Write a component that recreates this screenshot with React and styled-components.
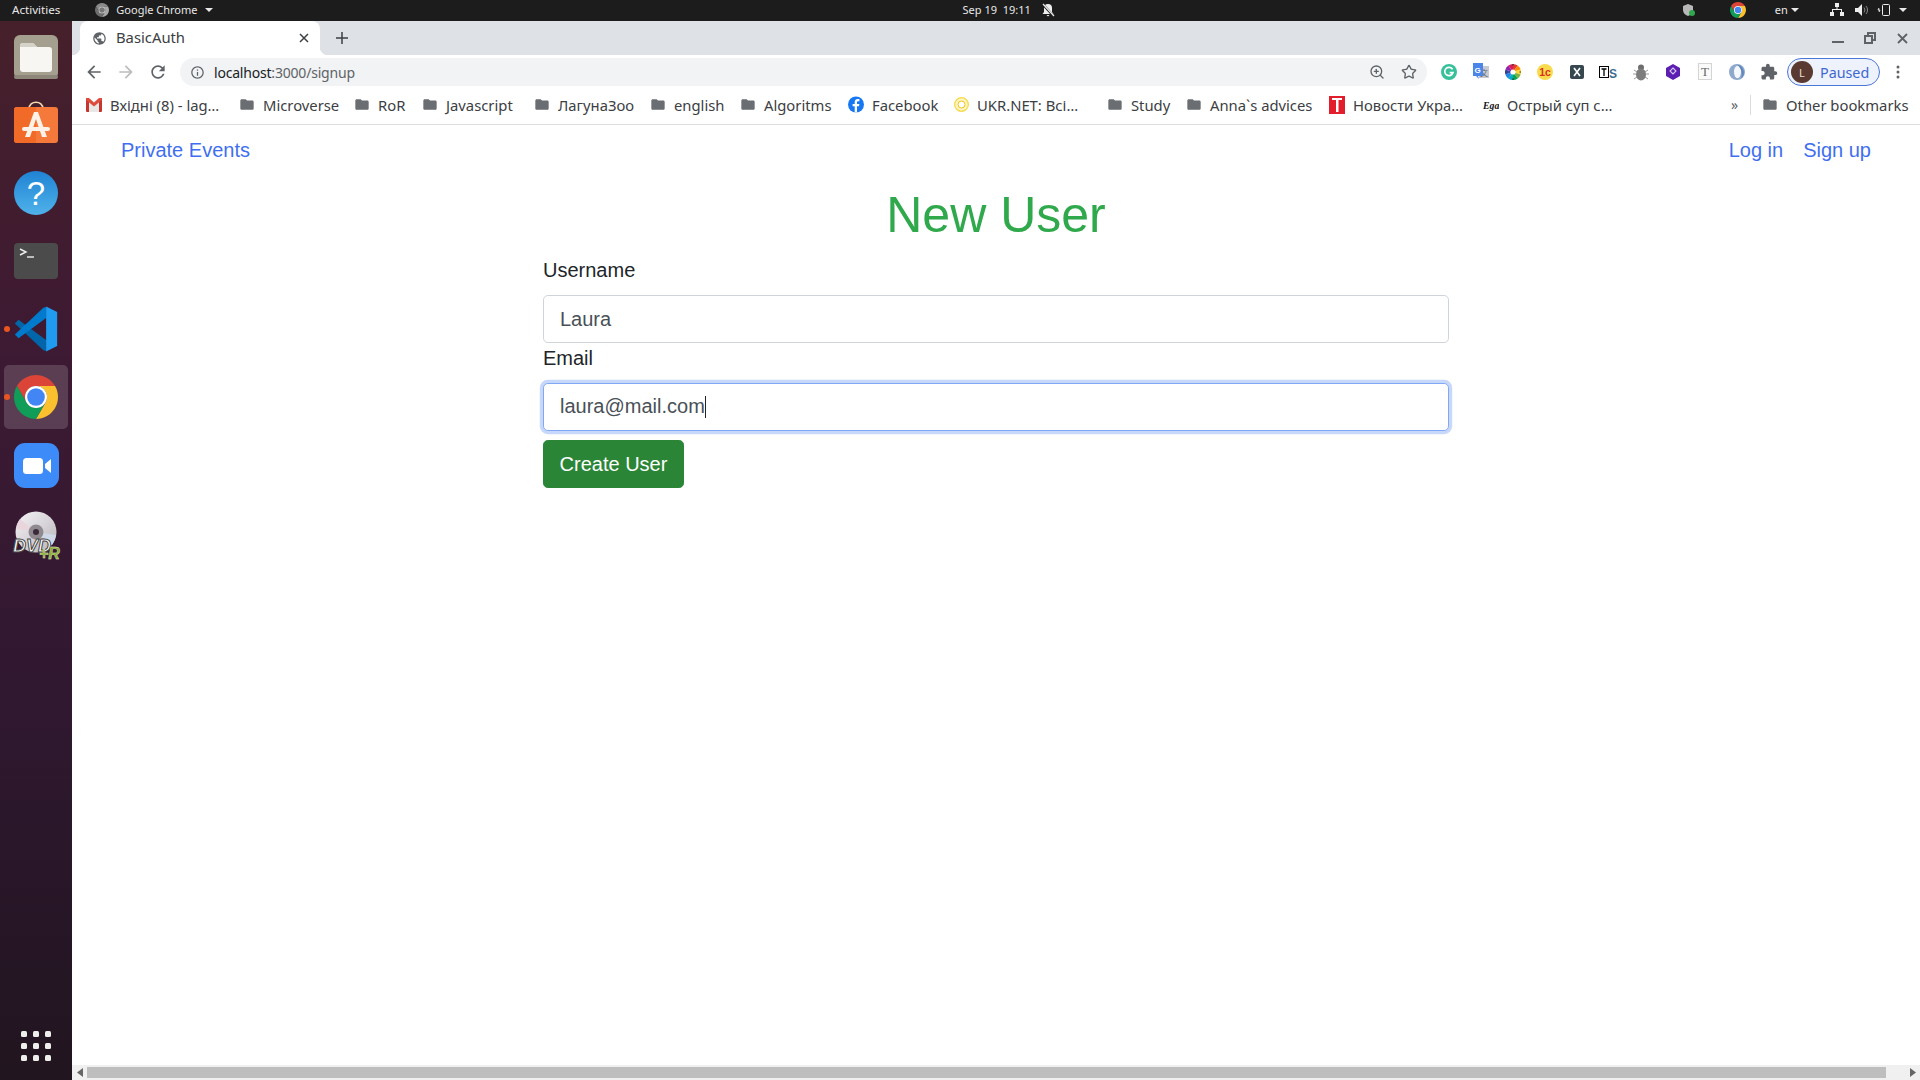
import React from 'react';
import styled, { createGlobalStyle } from 'styled-components';
import { Star, ZoomIn } from 'lucide-react';

const Global = createGlobalStyle`
  html, body { margin: 0; padding: 0; width: 1920px; height: 1080px; overflow: hidden; background: #fff; }
  #root { width: 1920px; height: 1080px; }
  * { box-sizing: border-box; }
`;

const UI = `"Noto Sans", "Open Sans", sans-serif`;
const WEB = `"Liberation Sans", Arial, sans-serif`;

const Screen = styled.div`display: flex; flex-direction: column; width: 1920px; height: 1080px; overflow: hidden;`;
const TopBar = styled.header`
  display: flex; align-items: center; height: 21px; flex: none; padding-bottom: 2px; background: #1c1c1c; color: #e8e8e8;
  font: 11px ${UI};
`;
const TopItem = styled.div`display: flex; align-items: center; gap: ${p => p.$gap || 0}px; margin-left: ${p => p.$ml || 0}px; white-space: nowrap; font-size: ${p => p.$fs || 11}px;`;
const Caret = styled.span`width: 0; height: 0; border-left: 4px solid transparent; border-right: 4px solid transparent; border-top: 4px solid #e8e8e8; margin-left: ${p => p.$ml || 0}px;`;

const Main = styled.div`display: flex; flex: 1; min-height: 0;`;
const Dock = styled.nav`
  width: 72px; flex: none; display: flex; flex-direction: column; align-items: center; padding-top: 4px;
  background: linear-gradient(180deg, #46202a 0%, #3e1a33 30%, #2f1830 65%, #21151f 100%);
`;
const DockItem = styled.div`
  position: relative; width: 64px; height: 64px; margin-bottom: 4px; flex: none; border-radius: 5px;
  display: flex; align-items: center; justify-content: center;
  background: ${p => p.$active ? 'rgba(255,255,255,.16)' : 'transparent'};
`;
const RunDot = styled.span`position: absolute; left: 0; top: 29px; width: 6px; height: 6px; border-radius: 50%; background: #e95420;`;
const GridButton = styled.div`
  margin-top: auto; margin-bottom: 19px; display: grid; grid-template-columns: repeat(3, 6px); gap: 6px;
`;
const GridDot = styled.span`width: 6px; height: 6px; border-radius: 1.5px; background: #eeeeea;`;

const Browser = styled.div`flex: 1; min-width: 0; display: flex; flex-direction: column; background: #fff;`;
const TabStrip = styled.div`height: 34px; flex: none; background: #dee1e6; display: flex; align-items: stretch; padding-left: 8px;`;
const Tab = styled.div`
  position: relative; width: 240px; background: #fff; border-radius: 8px 8px 0 0; display: flex; align-items: center;
  padding-left: 12px; font: 14.8px ${UI}; color: #3c4043;
  &::before, &::after { content: ''; position: absolute; bottom: 0; width: 8px; height: 8px; }
  &::before { left: -8px; background: radial-gradient(circle at 0 0, transparent 8px, #fff 8.5px); }
  &::after { right: -8px; background: radial-gradient(circle at 100% 0, transparent 8px, #fff 8.5px); }
`;
const TabTitle = styled.span`margin-left: 9px; margin-bottom: 2px; flex: 1;`;
const TabClose = styled.span`display: flex; margin-right: 11px;`;
const NewTab = styled.div`width: 44px; display: flex; align-items: center; justify-content: center;`;
const WindowControls = styled.div`margin-left: auto; display: flex; align-items: center; padding-right: 2px;`;
const WinBtn = styled.div`width: 32px; height: 34px; display: flex; align-items: center; justify-content: center;`;

const Toolbar = styled.div`height: 34px; flex: none; display: flex; align-items: center; padding: 0 6px; background: #fff;`;
const NavBtn = styled.div`width: 32px; height: 32px; flex: none; display: flex; align-items: center; justify-content: center;`;
const Omnibox = styled.div`
  flex: 1; height: 28px; margin: 0 6px; border-radius: 14px; background: #f1f3f4; display: flex; align-items: center; padding: 0 2px 0 10px;
  font: 14px ${UI}; color: #5f6368;
`;
const UrlHost = styled.span`color: #202124;`;
const UrlText = styled.div`margin-left: 9px; flex: 1; letter-spacing: -.2px;`;
const OmniIcon = styled.div`width: 32px; display: flex; justify-content: center;`;
const Pill = styled.div`
  width: 93px; height: 28px; flex: none; margin: 0 2px; border: 1.5px solid #4a76d8; border-radius: 14px; background: #edf2fc;
  display: flex; align-items: center; padding-left: 3px; color: #3f68cf; font: 14.3px ${UI};
`;
const Avatar = styled.span`width: 22px; height: 22px; border-radius: 50%; background: #5a3a30; color: #e6dcd6; font-size: 11px; display: flex; align-items: center; justify-content: center; margin-right: 7px;`;

const BookmarksBar = styled.div`
  height: 36px; flex: none; display: flex; align-items: center; padding: 0 15px 4px 14px; border-bottom: 1px solid #dadce0;
  font: 14.8px ${UI}; color: #3c4043; background: #fff;
`;
const Bookmark = styled.div`display: flex; align-items: center; width: ${p => p.$w}px; flex: none; white-space: nowrap;`;
const BmIcon = styled.span`width: 16px; height: 16px; flex: none; display: flex; align-items: center; justify-content: center; margin-right: 8px;`;
const BmLabel = styled.span``;
const More = styled.div`margin-left: auto; font-size: 14px; color: #5f6368; width: 19px;`;
const Sep = styled.span`width: 1px; height: 20px; background: #dadce0; margin-right: 11px;`;

const Page = styled.main`flex: 1; min-height: 0; background: #fff; font: 20px/30px ${WEB}; color: #212529;`;
const SiteNav = styled.div`height: 50px; display: flex; align-items: center; justify-content: space-between; padding: 0 49px;`;
const NavLink = styled.a`color: #3f6ff0; text-decoration: none; margin-left: ${p => p.$ml || 0}px;`;
const NavRight = styled.div`display: flex;`;
const Form = styled.div`width: 906px; margin: 0 auto;`;
const Heading = styled.h1`margin: 10px 0 9.6px; font: 400 50px/60px ${WEB}; color: #2fa94b; text-align: center;`;
const Label = styled.label`display: block; margin-bottom: 10px; height: 30px;`;
const Field = styled.div`
  height: 48px; padding: ${p => p.$focus ? '7px' : '8px'} 16px 0; border: 1px solid ${p => p.$focus ? '#80a8f5' : '#ced4da'}; border-radius: 4.8px; color: #495057; background: #fff;
  box-shadow: ${p => p.$focus ? '0 0 0 3.2px #c8d8fb' : 'none'}; line-height: 30px;
`;
const Cursor = styled.span`display: inline-block; width: 1px; height: 22px; background: #212529; vertical-align: -5px;`;
const Button = styled.button`
  display: block; margin-top: 9px; width: 141px; height: 48px; border: 1px solid #2a8636; border-radius: 4.8px; background: #2a8636; color: #fff;
  font: 20px/30px ${WEB}; padding: 0;
`;

const HScroll = styled.div`height: 15px; flex: none; display: flex; align-items: center; background: #f0f0f0;`;
const ScrollArrow = styled.div`width: 15px; display: flex; justify-content: center;`;
const Thumb = styled.div`flex: 1; height: 11px; background: #bebebe; margin-right: 19px;`;

const Icon = ({ d, size = 24, fill = '#5f6368' }) => (
  <svg width={size} height={size} viewBox="0 0 24 24" fill={fill}><path d={d} /></svg>
);
const FOLDER = 'M10 4H4c-1.1 0-1.99.9-1.99 2L2 18c0 1.1.9 2 2 2h16c1.1 0 2-.9 2-2V8c0-1.1-.9-2-2-2h-8l-2-2z';
const Folder = () => <Icon d={FOLDER} size={17} fill="#6a6d71" />;

const ChromeLogo = ({ size, gray }) => (
  <svg width={size} height={size} viewBox="4 4 40 40">
    <path d="M24 14H41.32A20 20 0 0 0 6.68 14L15.34 29A10 10 0 0 1 24 14Z" fill={gray ? '#8a8a8a' : '#db4437'} />
    <path d="M24 14H41.32A20 20 0 0 1 24 44L32.66 29A10 10 0 0 0 24 14Z" fill={gray ? '#a8a8a8' : '#fbc02d'} />
    <path d="M15.34 29L6.68 14A20 20 0 0 0 24 44L32.66 29A10 10 0 0 1 15.34 29Z" fill={gray ? '#6e6e6e' : '#0f9d58'} />
    <circle cx="24" cy="24" r="10" fill={gray ? '#ddd' : '#fff'} />
    <circle cx="24" cy="24" r="8" fill={gray ? '#777' : '#4285f4'} />
  </svg>
);

const FilesIcon = () => (
  <svg width="44" height="44" viewBox="0 0 44 44">
    <rect width="44" height="44" rx="6" fill="#a49f8e" />
    <rect y="40" width="44" height="4" rx="2" fill="#8c8778" />
    <path d="M6 11a3 3 0 0 1 3-3h10l4 4h12a3 3 0 0 1 3 3v19a3 3 0 0 1-3 3H9a3 3 0 0 1-3-3z" fill="#f7f6f3" />
    <path d="M6 11a3 3 0 0 1 3-3h10l4 4H6z" fill="#d5d2c8" />
  </svg>
);
const ShopIcon = () => (
  <svg width="44" height="48" viewBox="0 0 44 48">
    <path d="M15 8c0-9 14-9 14 0" fill="none" stroke="#f5d8b0" strokeWidth="1.6" />
    <rect y="6" width="44" height="36" rx="3" fill="#f4793b" />
    <path d="M0 9a3 3 0 0 1 3-3h19v36H3a3 3 0 0 1-3-3z" fill="#f26a27" />
    <path d="M20 11h4l9 25h-5l-6-18-6 18h-5z" fill="#fdf1e8" />
    <rect x="8" y="26" width="28" height="4" rx="2" fill="#fdf1e8" />
  </svg>
);
const HelpIcon = () => (
  <svg width="44" height="44" viewBox="0 0 44 44">
    <defs><linearGradient id="h" x1="0" y1="0" x2="0" y2="1"><stop offset="0" stopColor="#2083d4" /><stop offset="1" stopColor="#4fb2ea" /></linearGradient></defs>
    <circle cx="22" cy="22" r="22" fill="url(#h)" />
    <text x="22" y="34" textAnchor="middle" fontFamily="Liberation Sans" fontSize="33" fill="#fff">?</text>
  </svg>
);
const TerminalIcon = () => (
  <svg width="44" height="36" viewBox="0 0 44 36">
    <rect width="44" height="36" rx="4" fill="#4b4b4b" />
    <path d="M6 6l6 3-6 3" fill="none" stroke="#eee" strokeWidth="1.4" />
    <path d="M13 14h7" stroke="#eee" strokeWidth="1.4" />
  </svg>
);
const VSCode = () => (
  <svg width="46" height="46" viewBox="0 0 100 100">
    <polygon points="4,38 12,30 72,74 72,98 66,96" fill="#0065a9" />
    <polygon points="72,2 72,26 12,70 4,62 66,4" fill="#007acc" />
    <polygon points="72,1 96,13 96,87 72,99" fill="#1f9cf0" />
  </svg>
);
const ZoomApp = () => (
  <svg width="45" height="45" viewBox="0 0 45 45">
    <rect width="45" height="45" rx="11" fill="#3d8bf8" />
    <rect x="9" y="15" width="20" height="16" rx="3.5" fill="#fff" />
    <path d="M31 21l6-5v14l-6-5z" fill="#fff" />
  </svg>
);
const DvdIcon = () => (
  <svg width="52" height="56" viewBox="0 -4 52 56">
    <defs><linearGradient id="d" x1="0" y1="0" x2="1" y2="1"><stop offset="0" stopColor="#f4f4f4" /><stop offset=".5" stopColor="#d8d4da" /><stop offset="1" stopColor="#b4b4b4" /></linearGradient></defs>
    <circle cx="26" cy="23" r="20.5" fill="url(#d)" />
    <path d="M26 23L10 10A20.500 20.500 0 0 0 6 20z" fill="#e8d6dc" />
    <path d="M26 23L42 36A20.500 20.500 0 0 0 46 26z" fill="#cfd8e6" />
    <circle cx="26" cy="23" r="7.500" fill="#8e8a90" />
    <circle cx="26" cy="23" r="3" fill="#3a2a3a" />
    <text x="3" y="43" fontFamily="Liberation Sans" fontWeight="700" fontStyle="italic" fontSize="18" fill="#fff" stroke="#444" strokeWidth="1">DVD</text>
    <text x="29" y="50" fontFamily="Liberation Sans" fontWeight="700" fontStyle="italic" fontSize="16" fill="#86ad32" stroke="#eaf2d4" strokeWidth=".4">+R</text>
  </svg>
);

const GrammarlyIcon = () => (
  <svg width="16" height="16" viewBox="0 0 16 16"><circle cx="8" cy="8" r="8" fill="#36c19b" /><path d="M11.6 5.4A4.2 4.2 0 1 0 12 8.6H8.6" fill="none" stroke="#fff" strokeWidth="1.7" /></svg>
);
const TranslateIcon = () => (
  <svg width="16" height="18" viewBox="0 0 16 18">
    <rect x="6" y="3" width="10" height="12" fill="#c7cbd1" />
    <text x="11" y="13" textAnchor="middle" fontSize="8" fontFamily="Noto Sans CJK SC" fill="#5f6368">文</text>
    <path d="M0 0h10v13H5l1 3-3-3H0z" fill="#4a86e8" />
    <text x="4.7" y="9.5" textAnchor="middle" fontSize="8" fontWeight="700" fontFamily="Liberation Sans" fill="#fff">G</text>
  </svg>
);
const WHEEL = ['#e53935', '#fb8c00', '#fdd835', '#7cb342', '#00a651', '#00acc1', '#1e88e5', '#3949ab', '#8e24aa', '#d81b60'];
const WheelIcon = () => {
  const n = WHEEL.length;
  return (
    <svg width="16" height="16" viewBox="-8 -8 16 16">
      {WHEEL.map((c, i) => {
        const a = (i / n) * 2 * Math.PI, b = ((i + 1) / n) * 2 * Math.PI;
        return <path key={c} d={`M0 0L${8 * Math.sin(a)} ${-8 * Math.cos(a)}A8 8 0 0 1 ${8 * Math.sin(b)} ${-8 * Math.cos(b)}Z`} fill={c} />;
      })}
      <circle r="2.6" fill="#fff" />
      <path d="M0-8.5v2M0 6.5v2M-8.5 0h2M6.5 0h2" stroke="#333" strokeWidth="1.2" />
    </svg>
  );
};
const OneCIcon = () => (
  <svg width="16" height="16" viewBox="0 0 16 16"><circle cx="8" cy="8" r="8" fill="#f9dc4e" /><text x="8" y="11.5" textAnchor="middle" fontFamily="Liberation Sans" fontWeight="700" fontSize="10.5" fill="#d8321c">1c</text></svg>
);
const XIcon = () => (
  <svg width="14" height="14" viewBox="0 0 14 14"><rect width="14" height="14" rx="2" fill="#37474f" /><path d="M4 3l6 8M10 3l-6 8" stroke="#fff" strokeWidth="1.6" /></svg>
);
const TsIcon = () => (
  <svg width="20" height="16" viewBox="0 -2 20 16">
    <rect x=".5" y=".5" width="9" height="11" fill="#fff" stroke="#000" />
    <path d="M2.5 3h5M5 3v7" stroke="#000" strokeWidth="1.3" />
    <text x="10" y="11.500" fontFamily="Liberation Sans" fontWeight="700" fontSize="12" fill="#3d6d8f">S</text>
  </svg>
);
const BugIcon = () => (
  <svg width="16" height="17" viewBox="0 0 16 17">
    <path d="M1 6l3 2M15 6l-3 2M0 10h3M16 10h-3M1 15l3-2M15 15l-3-2" stroke="#999" strokeWidth="1" />
    <circle cx="8" cy="3.5" r="3" fill="#6e6e6e" />
    <ellipse cx="8" cy="10.5" rx="5" ry="6" fill="#7d7d7d" />
  </svg>
);
const HexIcon = () => (
  <svg width="14" height="16" viewBox="0 0 14 16">
    <path d="M7 0l7 4v8l-7 4-7-4V4z" fill="#5b1fb1" />
    <path d="M7 4l3 3-3 3-3-3z" fill="none" stroke="#d9c8f5" strokeWidth="1.1" />
  </svg>
);
const PaperIcon = () => (
  <svg width="15" height="18" viewBox="0 0 15 18">
    <rect x=".5" y=".5" width="13" height="16" fill="#fafafa" stroke="#d4d4d4" />
    <text x="7" y="13" textAnchor="middle" fontFamily="Liberation Serif" fontSize="13" fill="#666">T</text>
  </svg>
);
const RingIcon = () => (
  <svg width="16" height="16" viewBox="0 0 16 16">
    <circle cx="8" cy="8" r="8" fill="#8fa9cc" />
    <ellipse cx="8.5" cy="8" rx="3.5" ry="6.2" fill="#f4f7fb" />
    <path d="M8 .5a8 8 0 0 1 4 14c1.5-4 1.5-9-4-14z" fill="#5f86bd" />
  </svg>
);
const GmailIcon = () => (
  <svg width="16" height="14" viewBox="0 0 16 14">
    <path d="M3 4l5 4.500L13 4v10H3z" fill="#e8e8e8" />
    <path d="M0 0h3v14H1a1 1 0 0 1-1-1zM13 0h3v13a1 1 0 0 1-1 1h-2z" fill="#c5372c" />
    <path d="M0 0l3 0 5 4.5L13 0l3 0v2l-8 6.5L0 2z" fill="#de4c3e" />
  </svg>
);
const FbIcon = () => (
  <svg width="17" height="17" viewBox="0 0 16 16"><circle cx="8" cy="8" r="8" fill="#1877f2" /><path d="M9 16V9.8h2l.4-2.4H9V6c0-.8.3-1.2 1.2-1.2h1.2V2.6C11 2.5 10.400 2.500 9.800 2.500 8 2.500 6.700 3.600 6.700 5.600v1.800H4.600v2.400h2.100V16z" fill="#fff" /></svg>
);
const UkrIcon = () => (
  <svg width="15" height="15" viewBox="0 0 15 15"><circle cx="7.500" cy="7.500" r="6.800" fill="#fff6c4" stroke="#f7d94a" strokeWidth="1.300" /><circle cx="7.500" cy="7.500" r="3.500" fill="#fff" stroke="#f0c419" strokeWidth="1" /></svg>
);
const NewsIcon = () => (
  <svg width="16" height="18" viewBox="0 0 16 18"><rect width="16" height="18" fill="#e21e2d" /><path d="M3 2h10v2H9.500v12h-2.500V4H3z" fill="#fff" /></svg>
);
const EgaIcon = () => (
  <svg width="18" height="14" viewBox="0 0 18 14"><text x="0" y="11" fontFamily="Liberation Serif" fontStyle="italic" fontWeight="700" fontSize="11" fill="#111">Ega</text></svg>
);

const BOOKMARKS = [
  { icon: <GmailIcon />, label: 'Вхідні (8) - lag…', w: 153 },
  { label: 'Microverse', w: 115 },
  { label: 'RoR', w: 68 },
  { label: 'Javascript', w: 112 },
  { label: 'ЛагунаЗоо', w: 116 },
  { label: 'english', w: 90 },
  { label: 'Algoritms', w: 108 },
  { icon: <FbIcon />, label: 'Facebook', w: 105 },
  { icon: <UkrIcon />, label: 'UKR.NET: Всі…', w: 154 },
  { label: 'Study', w: 79 },
  { label: 'Anna`s advices', w: 143 },
  { icon: <NewsIcon />, label: 'Новости Укра…', w: 154 },
  { icon: <EgaIcon />, label: 'Острый суп с…', w: 200 },
];
const EXTENSIONS = [GrammarlyIcon, TranslateIcon, WheelIcon, OneCIcon, XIcon, TsIcon, BugIcon, HexIcon, PaperIcon, RingIcon];
const DOCK = [<FilesIcon />, <ShopIcon />, <HelpIcon />, <TerminalIcon />];

export default function App() {
  return (
    <Screen>
      <Global />
      <TopBar>
        <TopItem $ml={12} $fs={11.6}>Activities</TopItem>
        <TopItem $ml={35} $gap={7}><ChromeLogo size={14} gray />Google Chrome<Caret /></TopItem>
        <TopItem $ml={750}>Sep 19&nbsp;&nbsp;19:11</TopItem>
        <TopItem $ml={10}>
          <svg width="14" height="14" viewBox="0 0 14 14"><path d="M7 1a4 4 0 0 0-4 4v4l-1.500 2h11L11 9V5a4 4 0 0 0-4-4zM5.500 12h3L7 13.500z" fill="#eee" /><path d="M1.500 1l11 12" stroke="#1c1c1c" strokeWidth="2.500" /><path d="M2 1l11 12" stroke="#eee" strokeWidth="1.200" /></svg>
        </TopItem>
        <TopItem $ml={627}>
          <svg width="14" height="14" viewBox="0 0 14 14"><path d="M6 1l5 2v4c0 3-2 5-5 6-3-1-5-3-5-6V3z" fill="#b8b8b8" /><circle cx="10" cy="10" r="3" fill="#2fa84f" /></svg>
        </TopItem>
        <TopItem $ml={34}><ChromeLogo size={16} /></TopItem>
        <TopItem $ml={29} $gap={3}>en<Caret /></TopItem>
        <TopItem $ml={31}>
          <svg width="14" height="13" viewBox="0 0 14 13" fill="#eee"><rect x="5" y="0" width="4" height="4" /><rect x="0" y="9" width="4" height="4" /><rect x="10" y="9" width="4" height="4" /><path d="M6.500 4h1v2H12v3h-1V7H3v2H2V6h4.500z" /></svg>
        </TopItem>
        <TopItem $ml={11}>
          <svg width="13" height="12" viewBox="0 0 13 12" fill="#eee"><path d="M0 4h3l4-4v12L3 8H0z" /><path d="M9 3.500a4 4 0 0 1 0 5M11 2a6 6 0 0 1 0 8" stroke="#888" fill="none" /></svg>
        </TopItem>
        <TopItem $ml={9}>
          <svg width="14" height="14" viewBox="0 0 14 14" fill="none" stroke="#eee"><rect x="5.500" y="1.500" width="7" height="11" rx="1" /><path d="M2 5L1 7h2l-1 2" /></svg>
        </TopItem>
        <TopItem $ml={8}><Caret /></TopItem>
      </TopBar>
      <Main>
        <Dock>
          {DOCK.map((icon, i) => <DockItem key={i}>{icon}</DockItem>)}
          <DockItem><RunDot /><VSCode /></DockItem>
          <DockItem $active><RunDot /><ChromeLogo size={44} /></DockItem>
          <DockItem><ZoomApp /></DockItem>
          <DockItem><DvdIcon /></DockItem>
          <GridButton>{Array.from({ length: 9 }, (_, i) => <GridDot key={i} />)}</GridButton>
        </Dock>
        <Browser>
          <TabStrip>
            <Tab>
              <Icon size={15} fill="#5f6368" d="M12 2C6.480 2 2 6.480 2 12s4.480 10 10 10 10-4.480 10-10S17.520 2 12 2zm-1 17.930c-3.950-.49-7-3.850-7-7.930 0-.62.08-1.210.21-1.790L9 15v1c0 1.100.9 2 2 2v1.930zm6.900-2.540c-.26-.81-1-1.390-1.900-1.390h-1v-3c0-.55-.45-1-1-1H8v-2h2c.55 0 1-.45 1-1V7h2c1.100 0 2-.9 2-2v-.41c2.930 1.190 5 4.060 5 7.410 0 2.080-.8 3.970-2.100 5.390z" />
              <TabTitle>BasicAuth</TabTitle>
              <TabClose><svg width="10" height="10" viewBox="0 0 10 10"><path d="M1 1l8 8M9 1l-8 8" stroke="#3c4043" strokeWidth="1.500" /></svg></TabClose>
            </Tab>
            <NewTab><svg width="12" height="12" viewBox="0 0 12 12"><path d="M6 0v12M0 6h12" stroke="#3c4043" strokeWidth="1.500" /></svg></NewTab>
            <WindowControls>
              <WinBtn><svg width="12" height="10" viewBox="0 0 12 10"><path d="M0 9h12" stroke="#5f6368" strokeWidth="2" /></svg></WinBtn>
              <WinBtn><svg width="12" height="12" viewBox="0 0 12 12" fill="none" stroke="#5f6368" strokeWidth="2"><rect x="4" y="1" width="7" height="7" /><rect x="1" y="4" width="7" height="7" fill="#dee1e6" /></svg></WinBtn>
              <WinBtn><svg width="11" height="11" viewBox="0 0 11 11"><path d="M1 1l9 9M10 1l-9 9" stroke="#5f6368" strokeWidth="1.800" /></svg></WinBtn>
            </WindowControls>
          </TabStrip>
          <Toolbar>
            <NavBtn><Icon size={20} d="M20 11H7.830l5.590-5.590L12 4l-8 8 8 8 1.410-1.410L7.830 13H20v-2z" /></NavBtn>
            <NavBtn><Icon size={20} fill="#babcbe" d="M12 4l-1.410 1.410L16.170 11H4v2h12.170l-5.580 5.590L12 20l8-8z" /></NavBtn>
            <NavBtn><Icon size={20} d="M17.650 6.350C16.200 4.900 14.210 4 12 4c-4.420 0-7.990 3.580-7.990 8s3.570 8 7.990 8c3.730 0 6.840-2.550 7.730-6h-2.080c-.82 2.330-3.040 4-5.650 4-3.310 0-6-2.690-6-6s2.690-6 6-6c1.660 0 3.140.69 4.220 1.780L13 11h7V4l-2.350 2.350z" /></NavBtn>
            <Omnibox>
              <Icon size={15} d="M11 7h2v2h-2zm0 4h2v6h-2zm1-9C6.480 2 2 6.480 2 12s4.480 10 10 10 10-4.480 10-10S17.520 2 12 2zm0 18c-4.410 0-8-3.590-8-8s3.590-8 8-8 8 3.590 8 8-3.590 8-8 8z" />
              <UrlText><UrlHost>localhost</UrlHost>:3000/signup</UrlText>
              <OmniIcon><ZoomIn size={16} color="#5f6368" strokeWidth={2} /></OmniIcon>
              <OmniIcon><Star size={16} color="#5f6368" strokeWidth={2} /></OmniIcon>
            </Omnibox>
            {EXTENSIONS.map((Ext, i) => <NavBtn key={i}><Ext /></NavBtn>)}
            <NavBtn><Icon size={18} d="M20.500 11H19V7c0-1.100-.9-2-2-2h-4V3.500C13 2.120 11.880 1 10.500 1S8 2.120 8 3.500V5H4c-1.100 0-1.990.9-1.990 2v3.800H3.500c1.490 0 2.700 1.210 2.700 2.700s-1.210 2.700-2.700 2.700H2V20c0 1.100.9 2 2 2h3.800v-1.500c0-1.490 1.210-2.700 2.700-2.700 1.490 0 2.700 1.210 2.700 2.700V22H17c1.100 0 2-.9 2-2v-4h1.500c1.380 0 2.500-1.120 2.500-2.500S21.880 11 20.500 11z" /></NavBtn>
            <Pill><Avatar>L</Avatar>Paused</Pill>
            <NavBtn><svg width="4" height="14" viewBox="0 0 4 14" fill="#5f6368"><circle cx="2" cy="2" r="1.500" /><circle cx="2" cy="7" r="1.500" /><circle cx="2" cy="12" r="1.500" /></svg></NavBtn>
          </Toolbar>
          <BookmarksBar>
            {BOOKMARKS.map(b => (
              <Bookmark key={b.label} $w={b.w}>
                <BmIcon>{b.icon || <Folder />}</BmIcon>
                <BmLabel>{b.label}</BmLabel>
              </Bookmark>
            ))}
            <More>»</More>
            <Sep />
            <Bookmark $w={143}><BmIcon><Folder /></BmIcon><BmLabel>Other bookmarks</BmLabel></Bookmark>
          </BookmarksBar>
          <Page>
            <SiteNav>
              <NavLink href="#">Private Events</NavLink>
              <NavRight>
                <NavLink href="#">Log in</NavLink>
                <NavLink href="#" $ml={20}>Sign up</NavLink>
              </NavRight>
            </SiteNav>
            <Form>
              <Heading>New User</Heading>
              <Label>Username</Label>
              <Field>Laura</Field>
              <Label>Email</Label>
              <Field $focus>laura@mail.com<Cursor /></Field>
              <Button>Create User</Button>
            </Form>
          </Page>
          <HScroll>
            <ScrollArrow><svg width="6" height="9" viewBox="0 0 6 9"><path d="M6 0v9L0 4.500z" fill="#666" /></svg></ScrollArrow>
            <Thumb />
            <ScrollArrow><svg width="6" height="9" viewBox="0 0 6 9"><path d="M0 0v9l6-4.500z" fill="#666" /></svg></ScrollArrow>
          </HScroll>
        </Browser>
      </Main>
    </Screen>
  );
}
